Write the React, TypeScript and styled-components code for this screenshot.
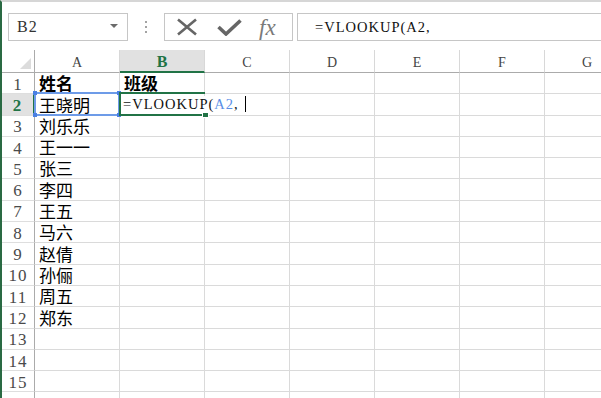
import styled, { createGlobalStyle } from 'styled-components';

const GlobalStyle = createGlobalStyle`
  html, body {
    margin: 0;
    padding: 0;
    background: #ffffff;
  }
  body {
    width: 601px;
    height: 398px;
    overflow: hidden;
  }
`;

const GREEN = '#217346';

const rows: [string, string][] = [
  ['姓名', '班级'],
  ['王晓明', ''],
  ['刘乐乐', ''],
  ['王一一', ''],
  ['张三', ''],
  ['李四', ''],
  ['王五', ''],
  ['马六', ''],
  ['赵倩', ''],
  ['孙俪', ''],
  ['周五', ''],
  ['郑东', ''],
  ['', ''],
  ['', ''],
  ['', ''],
  ['', ''],
];

const letters = ['A', 'B', 'C', 'D', 'E', 'F', 'G'];

export default function App() {
  return (
    <>
      <GlobalStyle />
      <Window>
        <Toolbar>
          <NameBox>
            B2
            <Caret />
          </NameBox>
          <Grip>
            <Dot />
            <Dot />
            <Dot />
          </Grip>
          <ButtonGroup>
            <svg width="22" height="18" viewBox="0 0 22 18">
              <path d="M2 1.5 L20 16.5 M20 1.5 L2 16.5" stroke="#666" strokeWidth="2.6" fill="none" />
            </svg>
            <svg width="25" height="17" viewBox="0 0 25 17">
              <path d="M1.5 8 L9 15 L23.5 1.5" stroke="#666" strokeWidth="3.6" fill="none" />
            </svg>
            <Fx>fx</Fx>
          </ButtonGroup>
          <FormulaInput>=VLOOKUP(A2,</FormulaInput>
        </Toolbar>

        <Sheet>
          <Corner>
            <CornerTriangle />
          </Corner>
          {letters.map((l) => (
            <ColHead key={l} $active={l === 'B'}>
              {l}
            </ColHead>
          ))}

          {rows.map(([a, b], i) => {
            const n = i + 1;
            return [
              <RowHead key={`h${n}`} $active={n === 2}>
                {n < 16 ? n : ''}
              </RowHead>,
              <Cell key={`a${n}`} $bold={n === 1}>
                {a}
                {n === 2 && (
                  <RefBox>
                    <Handle $pos="tl" />
                    <Handle $pos="tr" />
                    <Handle $pos="bl" />
                    <Handle $pos="br" />
                  </RefBox>
                )}
              </Cell>,
              <Cell key={`b${n}`} $bold={n === 1}>
                {n === 2 ? (
                  <>
                    <ActiveBox>
                      <FillHandle />
                    </ActiveBox>
                    <Editing>
                      =VLOOKUP(<Ref>A2</Ref>,<Cursor />
                    </Editing>
                  </>
                ) : (
                  b
                )}
              </Cell>,
              ...letters.slice(2).map((l) => <Cell key={`${l}${n}`} />),
            ];
          })}
        </Sheet>
      </Window>
    </>
  );
}

const Window = styled.div`
  box-sizing: border-box;
  width: 601px;
  height: 398px;
  overflow: hidden;
  border-left: 2px solid #2a6a43;
  border-top: 2px solid #d6d6d6;
  background: #ffffff;
`;

const Toolbar = styled.div`
  display: flex;
  align-items: center;
  height: 28px;
  margin: 11px 0 9px 6px;
`;

const NameBox = styled.div`
  box-sizing: border-box;
  position: relative;
  width: 120px;
  height: 28px;
  border: 1px solid #c6c6c6;
  padding-left: 8px;
  display: flex;
  align-items: center;
  font-family: 'Liberation Serif', serif;
  font-size: 16px;
  letter-spacing: 1px;
  color: #333;
`;

const Caret = styled.span`
  position: absolute;
  right: 9px;
  top: 10px;
  width: 0;
  height: 0;
  border-left: 4px solid transparent;
  border-right: 4px solid transparent;
  border-top: 4px solid #6b6b6b;
`;

const Grip = styled.div`
  width: 36px;
  display: flex;
  flex-direction: column;
  align-items: center;
  gap: 3px;
`;

const Dot = styled.span`
  width: 2px;
  height: 2px;
  background: #a3a3a3;
`;

const ButtonGroup = styled.div`
  box-sizing: border-box;
  width: 129px;
  height: 28px;
  border: 1px solid #c6c6c6;
  display: flex;
  align-items: center;
  padding-left: 11px;
  gap: 19px;
`;

const Fx = styled.span`
  font-family: 'Liberation Serif', serif;
  font-style: italic;
  font-size: 23px;
  color: #7a7a7a;
  margin-left: -2px;
  line-height: 1;
`;

const FormulaInput = styled.div`
  box-sizing: border-box;
  flex: 1;
  height: 28px;
  margin-left: 4px;
  border: 1px solid #c6c6c6;
  border-right: none;
  padding-left: 17px;
  display: flex;
  align-items: center;
  font-family: 'Liberation Serif', serif;
  font-size: 14.5px;
  letter-spacing: 1px;
  color: #111;
`;

const Sheet = styled.div`
  display: grid;
  grid-template-columns: 33px repeat(7, 85px);
  grid-template-rows: 23px;
  grid-auto-rows: 21.3px;
`;

const Corner = styled.div`
  box-sizing: border-box;
  border-right: 1px solid #ababab;
  border-bottom: 1px solid #ababab;
  display: flex;
  align-items: flex-end;
  justify-content: flex-end;
  padding: 0 3px 3px 0;
`;

const CornerTriangle = styled.span`
  width: 0;
  height: 0;
  border-left: 11px solid transparent;
  border-bottom: 11px solid #dcdcdc;
`;

const ColHead = styled.div<{ $active?: boolean }>`
  box-sizing: border-box;
  display: flex;
  align-items: center;
  justify-content: center;
  padding-top: 3px;
  border-right: 1px solid #d8d8d8;
  border-bottom: ${(p) => (p.$active ? `2px solid ${GREEN}` : '1px solid #ababab')};
  background: ${(p) => (p.$active ? '#e1e1e1' : '#ffffff')};
  color: ${(p) => (p.$active ? GREEN : '#444')};
  font-family: 'Liberation Serif', serif;
  font-weight: ${(p) => (p.$active ? 700 : 400)};
  font-size: ${(p) => (p.$active ? '16px' : '14px')};
`;

const RowHead = styled.div<{ $active?: boolean }>`
  box-sizing: border-box;
  display: flex;
  align-items: center;
  justify-content: center;
  padding-top: 3px;
  border-right: ${(p) => (p.$active ? `2px solid ${GREEN}` : '1px solid #ababab')};
  border-bottom: 1px solid #dedede;
  background: ${(p) => (p.$active ? '#e1e1e1' : '#ffffff')};
  color: ${(p) => (p.$active ? GREEN : '#4a4a4a')};
  font-family: 'Liberation Serif', serif;
  font-weight: ${(p) => (p.$active ? 700 : 400)};
  font-size: 17px;
  letter-spacing: 1px;
`;

const Cell = styled.div<{ $bold?: boolean }>`
  box-sizing: border-box;
  position: relative;
  display: flex;
  align-items: flex-end;
  padding: 0 0 2px 4px;
  border-right: 1px solid #dadada;
  border-bottom: 1px solid #dadada;
  font-family: 'Noto Sans CJK SC', sans-serif;
  font-size: 17px;
  line-height: 17px;
  font-weight: ${(p) => (p.$bold ? 700 : 400)};
  color: #000;
  white-space: nowrap;
`;

const RefBox = styled.div`
  position: absolute;
  top: -2px;
  left: -1px;
  right: -1px;
  bottom: -1px;
  border: 2px solid #6d9be8;
  z-index: 2;
`;

const Handle = styled.span<{ $pos: 'tl' | 'tr' | 'bl' | 'br' }>`
  position: absolute;
  width: 4px;
  height: 4px;
  background: #4a80e3;
  top: ${(p) => (p.$pos[0] === 't' ? '-3px' : 'auto')};
  bottom: ${(p) => (p.$pos[0] === 'b' ? '-3px' : 'auto')};
  left: ${(p) => (p.$pos[1] === 'l' ? '-3px' : 'auto')};
  right: ${(p) => (p.$pos[1] === 'r' ? '-3px' : 'auto')};
`;

const ActiveBox = styled.div`
  position: absolute;
  top: -2px;
  left: -1px;
  right: -1px;
  bottom: -1px;
  border-top: 2px solid ${GREEN};
  border-left: 2px solid ${GREEN};
  border-bottom: 2px solid ${GREEN};
  z-index: 3;
`;

const FillHandle = styled.span`
  position: absolute;
  right: -3px;
  bottom: -3px;
  width: 5px;
  height: 5px;
  background: ${GREEN};
  outline: 1px solid #fff;
`;

const Editing = styled.span`
  position: relative;
  z-index: 4;
  display: flex;
  align-items: center;
  margin-left: -1px;
  padding-right: 2px;
  background: #fff;
  font-family: 'Liberation Serif', serif;
  font-size: 14.5px;
  letter-spacing: 1px;
  line-height: 17px;
  font-weight: 400;
  color: #111;
`;

const Ref = styled.span`
  color: #5b8fe6;
`;

const Cursor = styled.span`
  display: inline-block;
  width: 1px;
  height: 16px;
  margin-left: 6px;
  background: #000;
`;
